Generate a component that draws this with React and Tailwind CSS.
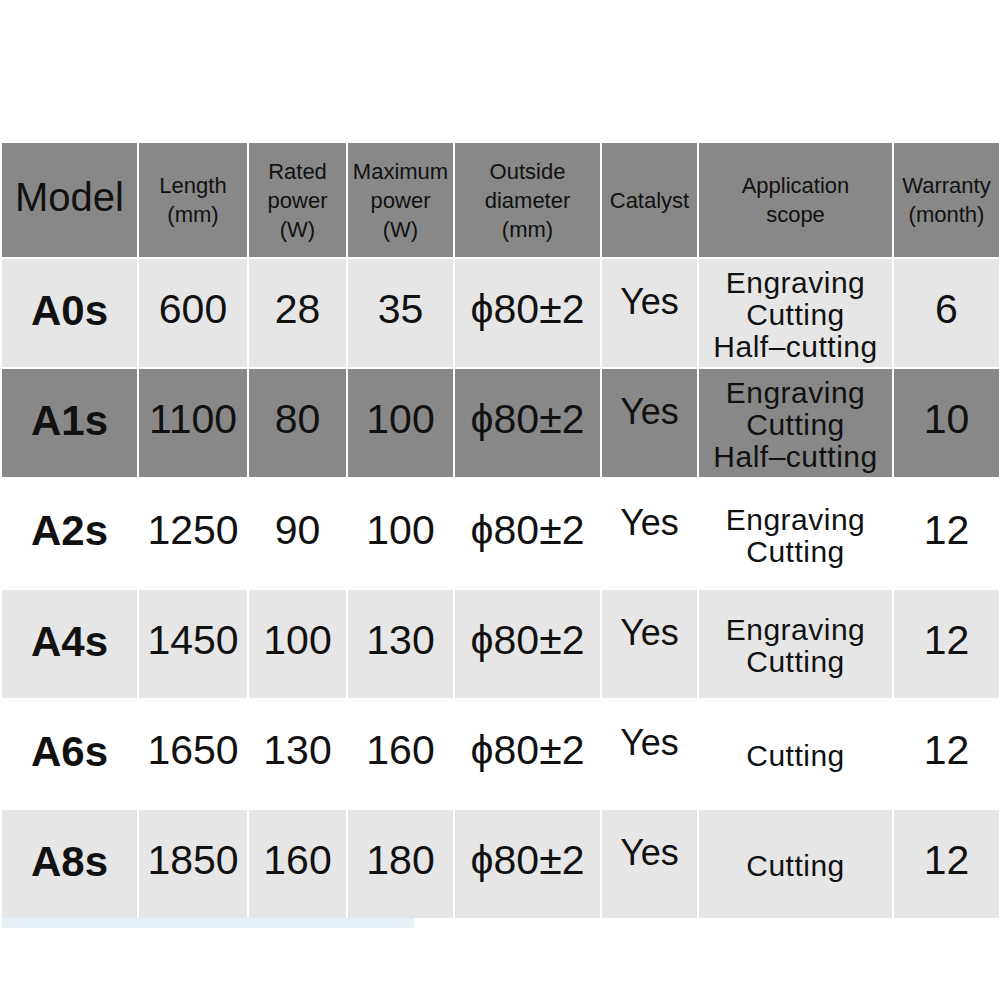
const header = [
  { lines: ["Model"], big: true },
  { lines: ["Length", "(mm)"] },
  { lines: ["Rated", "power", "(W)"] },
  { lines: ["Maximum", "power", "(W)"] },
  { lines: ["Outside", "diameter", "(mm)"] },
  { lines: ["Catalyst"] },
  { lines: ["Application", "scope"] },
  { lines: ["Warranty", "(month)"] },
];

const rows = [
  { model: "A0s", length: "600", rated: "28", max: "35", scope: ["Engraving", "Cutting", "Half–cutting"], warranty: "6", bg: "bg-[#e6e6e6]" },
  { model: "A1s", length: "1100", rated: "80", max: "100", scope: ["Engraving", "Cutting", "Half–cutting"], warranty: "10", bg: "bg-[#888888]" },
  { model: "A2s", length: "1250", rated: "90", max: "100", scope: ["Engraving", "Cutting"], warranty: "12", bg: "bg-white" },
  { model: "A4s", length: "1450", rated: "100", max: "130", scope: ["Engraving", "Cutting"], warranty: "12", bg: "bg-[#e6e6e6]" },
  { model: "A6s", length: "1650", rated: "130", max: "160", scope: ["Cutting"], warranty: "12", bg: "bg-white" },
  { model: "A8s", length: "1850", rated: "160", max: "180", scope: ["Cutting"], warranty: "12", bg: "bg-[#e6e6e6]" },
];

const Cell = ({ bg, className = "", children }) => (
  <div className={`${bg} flex flex-col items-center justify-center text-center text-[#111] ${className}`}>
    {children}
  </div>
);

export default function App() {
  return (
    <div className="w-[1000px] h-[1000px] bg-white pt-[143px] pl-[2px] font-['Liberation_Sans',Arial,sans-serif]">
      <div className="grid grid-cols-[135px_108px_97px_105px_145px_95px_193px_105px] grid-rows-[114px_108px_108px_109px_108px_108px_108px] gap-[2px] bg-white w-[997px]">
        {/* Header */}
        {header.map((h, i) => (
          <Cell key={i} bg="bg-[#888888]" className={h.big ? "text-[40px] pb-[6px]" : "text-[22px] leading-[29px]"}>
            {h.lines.map((l) => (
              <span key={l}>{l}</span>
            ))}
          </Cell>
        ))}

        {/* Rows */}
        {rows.map((r) => (
          <div key={r.model} className="contents">
            <Cell bg={r.bg} className="text-[42px] font-bold pb-[6px]">{r.model}</Cell>
            <Cell bg={r.bg} className="text-[41px] pb-[6px]">{r.length}</Cell>
            <Cell bg={r.bg} className="text-[41px] pb-[6px]">{r.rated}</Cell>
            <Cell bg={r.bg} className="text-[41px] pb-[6px]">{r.max}</Cell>
            <Cell bg={r.bg} className="text-[41px] pb-[6px]">ϕ80±2</Cell>
            <Cell bg={r.bg} className="text-[36px] pb-[22px]">Yes</Cell>
            <Cell bg={r.bg} className="text-[30px] leading-[32px] tracking-[0.5px] pt-[4px]">
              {r.scope.map((s) => (
                <span key={s}>{s}</span>
              ))}
            </Cell>
            <Cell bg={r.bg} className="text-[41px] pb-[6px]">{r.warranty}</Cell>
          </div>
        ))}
      </div>
      <div className="h-[10px] w-[412px] bg-[#e5eff8]" />
    </div>
  );
}
